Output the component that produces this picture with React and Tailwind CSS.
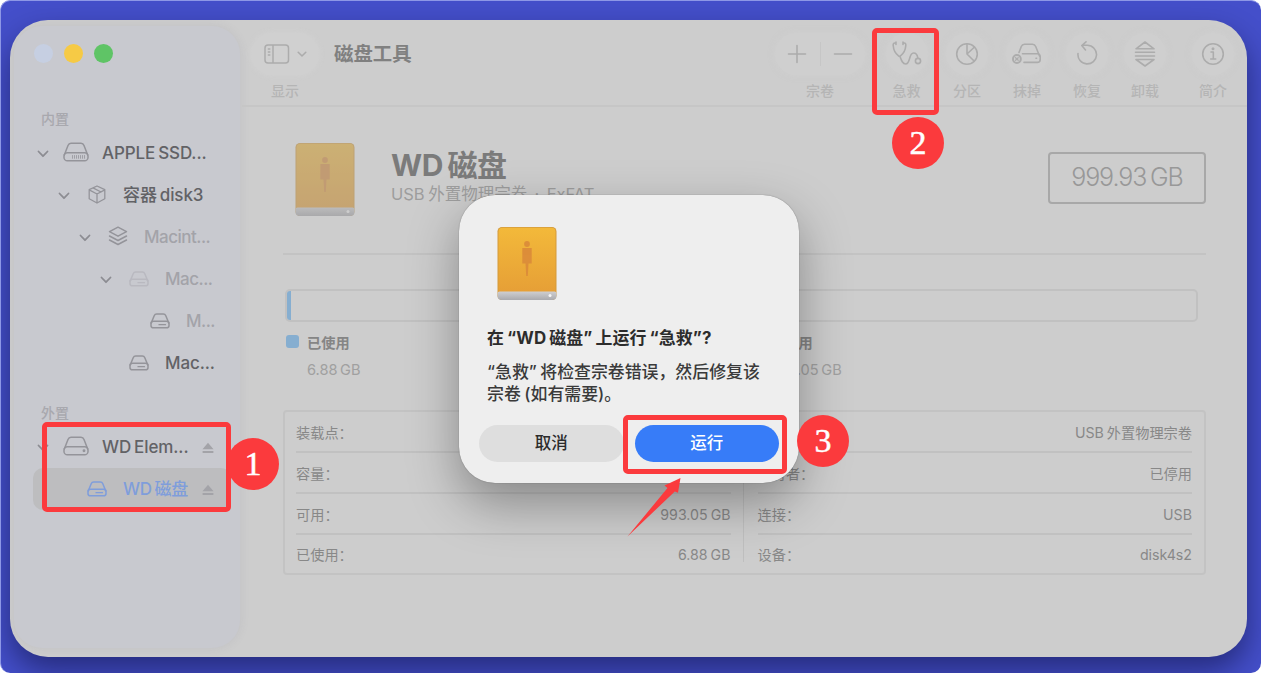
const SIDEBAR = [
  { section: '内置' },
  { label: 'APPLE SSD...', level: 0, icon: 'ssd', open: true, tone: 'strong' },
  { label: '容器 disk3', level: 1, icon: 'box', open: true, tone: 'strong' },
  { label: 'Macint...', level: 2, icon: 'layers', open: true, tone: 'dim' },
  { label: 'Mac...', level: 3, icon: 'disk', open: true, tone: 'dim', faint: true },
  { label: 'M...', level: 4, icon: 'disk', tone: 'dim' },
  { label: 'Mac...', level: 3, icon: 'disk', tone: 'strong' },
  { section: '外置' },
  { label: 'WD Elem...', level: 0, icon: 'hdd', open: true, tone: 'strong', eject: true },
  { label: 'WD 磁盘', level: 1, icon: 'disk', tone: 'active', eject: true, selected: true },
]

const INDENT = ['pl-[21px]', 'pl-[42px]', 'pl-[63px]', 'pl-[84px]', 'pl-[105px]']

const TONES = {
  strong: 'text-[#626266] tracking-[-0.1px]',
  dim: 'text-[#a3a3a9] tracking-[-0.5px]',
  active: 'text-[#7f9ddb] tracking-[-0.3px]',
}

const TOOLS = [
  { label: '急救', icon: 'aid', box: 'w-[61px]' },
  { label: '分区', icon: 'pie', box: 'w-[60px]' },
  { label: '抹掉', icon: 'erase', box: 'w-[60px]' },
  { label: '恢复', icon: 'restore', box: 'w-[60px]' },
  { label: '卸载', icon: 'unmount', box: 'w-[56px]' },
  { label: '简介', icon: 'info', box: 'ml-[10px] w-[60px]' },
]

const LEFT_INFO = [
  ['装载点：', ''],
  ['容量：', ''],
  ['可用：', '993.05 GB'],
  ['已使用：', '6.88 GB'],
]

const RIGHT_INFO = [
  ['类型：', 'USB 外置物理宗卷'],
  ['所有者：', '已停用'],
  ['连接：', 'USB'],
  ['设备：', 'disk4s2'],
]

export default function App() {
  return (
    <div className="h-[673px] w-[1261px] bg-white font-['Inter','Noto_Sans_CJK_SC',sans-serif]">
      <div className="relative h-full overflow-hidden rounded-[10px] border-l border-t border-[#8d97e6] bg-[#444fca] pl-[9px] pt-[19px]">
        <div className="flex h-[637px] w-[1237px] overflow-hidden rounded-[38px] bg-[#cdcdcd] shadow-[0_14px_30px_rgba(0,0,30,0.45)]">
          <Sidebar />
          <main className="flex min-w-0 flex-1 flex-col">
            <Toolbar />
            <DiskDetail />
          </main>
        </div>
        <Dialog />
        <Annotations />
      </div>
    </div>
  )
}

function Sidebar() {
  return (
    <aside className="mb-[9px] ml-[4px] mr-[2px] mt-[6px] flex w-[226px] flex-col rounded-[28px] bg-[#c8c9cf] shadow-[0_0_10px_rgba(120,120,140,0.14)]">
      <div className="flex gap-[11px] pl-[20px] pt-[18px]">
        <span className="size-[19px] rounded-full bg-[#c6cfe2]" />
        <span className="size-[19px] rounded-full bg-[#f6ca45]" />
        <span className="size-[19px] rounded-full bg-[#5fc466]" />
      </div>
      <div className="flex flex-col pt-[42px]">
        {SIDEBAR.map((item, i) =>
          item.section ? (
            <div key={i} className={`flex items-center pl-[27px] text-[14px] font-medium leading-none text-[#a8a8ae] ${i ? 'h-[42px] pt-[16px]' : 'h-[27px]'}`}>
              {item.section}
            </div>
          ) : (
            <SidebarRow key={i} item={item} />
          )
        )}
      </div>
    </aside>
  )
}

function SidebarRow({ item }) {
  const { level, icon, tone, open, eject, selected, faint, label } = item
  return (
    <div className={selected ? 'ml-[19px] mr-[9px] rounded-[10px] bg-[#bdbdbf]' : ''}>
      <div className={`flex h-[42px] items-center ${selected ? 'pl-[23px] pr-[17px]' : `pr-[26px] ${INDENT[level]}`}`}>
        <span className="flex w-[16px] shrink-0 justify-center text-[#8c8c92]">
          {open && (
            <svg className="mt-px" width="12" height="8" viewBox="0 0 12 8" fill="none" stroke="currentColor" strokeWidth="1.8" strokeLinecap="round" strokeLinejoin="round">
              <path d="M1.500 1.500 6 6.200l4.500-4.700" />
            </svg>
          )}
        </span>
        <span className={`ml-[12px] flex w-[26px] shrink-0 justify-center ${selected ? 'text-[#7f9ddb]' : faint ? 'text-[#b9b9c0]' : 'text-[#94949a]'}`}>
          <DriveIcon kind={icon} />
        </span>
        <span className={`ml-[13px] min-w-0 flex-1 whitespace-nowrap pt-px text-[17px] leading-none [word-spacing:-1.500px] ${TONES[tone]} ${selected ? 'font-medium' : 'font-[450]'}`}>
          {label}
        </span>
        {eject && (
          <svg className="mt-[2px] shrink-0" width="12" height="12" viewBox="0 0 12 12" fill="#a3a3a8">
            <path d="M6 .8 11.500 7.300H.5z" />
            <rect x=".5" y="9" width="11" height="1.900" rx=".6" />
          </svg>
        )}
      </div>
    </div>
  )
}

function DriveIcon({ kind }) {
  const stroke = { fill: 'none', stroke: 'currentColor', strokeWidth: 1.5, strokeLinecap: 'round', strokeLinejoin: 'round' }
  if (kind === 'ssd' || kind === 'hdd') {
    return (
      <svg className="-mt-[2px]" width="26" height="20" viewBox="0 0 26 20" {...stroke}>
        <path d="M1.300 13 5 3.400Q5.800 1.200 8 1.200H18Q20.200 1.200 21 3.400L24.700 13" />
        <rect x="1" y="10.800" width="24" height="8" rx="3.400" />
        {kind === 'ssd' ? (
          <path strokeWidth=".8" d="M9.500 13.500v2.800M11.500 13.500v2.800M13.500 13.500v2.800M15.500 13.500v2.800M17.500 13.500v2.800M19.500 13.500v2.800M21.500 13.500v2.800" />
        ) : (
          <circle cx="21" cy="14.800" r=".7" fill="currentColor" />
        )}
      </svg>
    )
  }
  if (kind === 'disk') {
    return (
      <svg className="-mt-px" width="20" height="16" viewBox="0 0 20 16" {...stroke}>
        <path d="M1.200 10 4.200 2.700Q4.900 1 6.700 1h6.600Q15.100 1 15.800 2.700L18.800 10" />
        <rect x="1" y="8.200" width="18" height="6.600" rx="2.400" />
        <path strokeWidth="1.300" d="M9 11.700h6.500" />
      </svg>
    )
  }
  if (kind === 'box') {
    return (
      <svg className="-mt-[2px]" width="18" height="19" viewBox="0 0 18 19" {...stroke} strokeWidth="1.300">
        <path d="M9 1 16.800 4.700v9L9 18 1.200 13.700v-9zM1.200 4.900 9 9l7.800-4.100M9 9v9M5 2.900l8 4.100" />
      </svg>
    )
  }
  return (
    <svg className="-mt-[2px]" width="20" height="20" viewBox="0 0 20 20" {...stroke}>
      <path d="M10 1.200 18.500 5.700 10 10.200 1.500 5.700zM1.500 10l8.500 4.500L18.500 10M1.500 14l8.500 4.500L18.500 14" />
    </svg>
  )
}

function Toolbar() {
  return (
    <header className="flex h-[87px] shrink-0 border-b-2 border-[#c6c6c6] pt-[13px] text-[#acacac]">
      <div className="ml-[9px] flex w-[68px] flex-col items-center">
        <div className="flex h-[42px] w-full items-center justify-center gap-[7px] rounded-full bg-[#d0d0d0] shadow-[0_0_6px_rgba(213,213,213,0.6)]">
          <svg width="26" height="20" viewBox="0 0 26 20" fill="none" stroke="currentColor" strokeWidth="1.500">
            <rect x="1" y="1" width="23.500" height="18" rx="3" />
            <path d="M9 1v18M3.800 5h2.500M3.800 8h2.500M3.800 11h2.500" />
          </svg>
          <svg width="10" height="7" viewBox="0 0 10 7" fill="none" stroke="currentColor" strokeWidth="1.600" strokeLinecap="round">
            <path d="M1.200 1.300 5 5l3.800-3.700" />
          </svg>
        </div>
        <ToolLabel>显示</ToolLabel>
      </div>
      <h1 className="ml-[15px] h-[43px] text-[19.400px] font-bold leading-[43px] text-[#808080]">磁盘工具</h1>
      <div className="ml-auto flex w-[90px] flex-col items-center">
        <div className="flex h-[42px] w-full items-center rounded-full bg-[#cfcfcf] shadow-[0_0_6px_rgba(211,211,211,0.5)]">
          <svg className="mx-auto" width="20" height="20" viewBox="0 0 20 20" stroke="currentColor" strokeWidth="1.600" strokeLinecap="round"><path d="M10 1.500v17M1.500 10h17" /></svg>
          <span className="h-[24px] w-px bg-[#c6c6c6]" />
          <svg className="mx-auto" width="20" height="20" viewBox="0 0 20 20" stroke="currentColor" strokeWidth="1.600" strokeLinecap="round"><path d="M1.500 10h17" /></svg>
        </div>
        <ToolLabel>宗卷</ToolLabel>
      </div>
      <div className="ml-[11px] mr-[4px] flex">
        {TOOLS.map((t) => (
          <div key={t.label} className={`flex flex-col items-center ${t.box}`}>
            <div className="flex size-[42px] items-center justify-center rounded-full bg-[#cfcfcf] shadow-[0_0_6px_rgba(211,211,211,0.5)]">
              <ToolIcon kind={t.icon} />
            </div>
            <ToolLabel>{t.label}</ToolLabel>
          </div>
        ))}
      </div>
    </header>
  )
}

function ToolLabel({ children }) {
  return <span className="mt-[8px] text-[14px] font-medium leading-[16px] text-[#b5b5b5]">{children}</span>
}

function ToolIcon({ kind }) {
  const props = { width: 30, height: 26, viewBox: '0 0 30 26', fill: 'none', stroke: 'currentColor', strokeWidth: 1.6, strokeLinecap: 'round', strokeLinejoin: 'round' }
  switch (kind) {
    case 'aid':
      return (
        <svg {...props}>
          <path d="M4 2H2.800Q1 2 1.200 4.500C1.500 8.500 3.300 12.500 6.500 14.800q1 .8 2 0C11.700 12.500 13.500 8.500 13.800 4.500Q14 2 12.200 2H11M4 1v2.500M11 1v2.500" />
          <path d="M8 15.500c1.500 4 2.500 7.500 5.700 7.500 5 0 2.800-11 7.800-11 3 0 4 2.500 4.300 5" />
          <circle cx="26" cy="20" r="2.600" />
        </svg>
      )
    case 'pie':
      return (
        <svg {...props}>
          <circle cx="15" cy="13" r="10.300" />
          <path d="M15 2.700V13l7.300 7.300M15 13l7.500-7" />
        </svg>
      )
    case 'erase':
      return (
        <svg {...props}>
          <path d="M7 11.500 9.300 5.500Q10.200 3.200 12.500 3.200h8q2.300 0 3.200 2.300L27.500 15" />
          <path d="M10.500 12.800h14.700q3 0 3 3v2.600q0 3-3 3H12" />
          <path d="M24 17.200h.6" />
          <circle cx="4.900" cy="18" r="3.900" strokeWidth="2" />
          <path strokeWidth="1.300" d="m3.600 16.700 2.600 2.600m0-2.600-2.600 2.600" />
        </svg>
      )
    case 'restore':
      return (
        <svg {...props}>
          <path d="M6 12.500a9.300 9.300 0 1 0 9.300-8.200H10M14 .8l-4.200 3.700L13.500 9" />
        </svg>
      )
    case 'unmount':
      return (
        <svg {...props}>
          <path d="M15 1 24 7.800H6zM5.500 11.300h19M5.500 15h19M6 18.500h18L15 25z" />
        </svg>
      )
    default:
      return (
        <svg {...props}>
          <circle cx="15" cy="13" r="10.300" />
          <path d="M13 11h2.300v7M12.700 18h5" />
          <circle cx="15" cy="7.800" r=".7" fill="currentColor" />
        </svg>
      )
  }
}

function DriveArt({ id, className = '' }) {
  return (
    <svg className={className} width="60" height="74" viewBox="0 0 60 74">
      <defs>
        <linearGradient id={`${id}-top`} x1="0" y1="0" x2="0" y2="1">
          <stop offset="0" stopColor="#f3b93a" />
          <stop offset="1" stopColor="#e59d36" />
        </linearGradient>
        <linearGradient id={`${id}-base`} x1="0" y1="0" x2="0" y2="1">
          <stop offset="0" stopColor="#cfcfd1" />
          <stop offset="1" stopColor="#aaaaae" />
        </linearGradient>
      </defs>
      <rect x=".5" y="0" width="59" height="73" rx="4.500" fill="#d39a3c" />
      <rect x="1.500" y=".7" width="57" height="70" rx="4" fill={`url(#${id}-top)`} />
      <path d="M.5 66.500q0-2 2-2h55q2 0 2 2v2.500q0 4-4.500 4H5Q.5 73 .5 69z" fill={`url(#${id}-base)`} />
      <circle cx="53" cy="68.500" r="1.500" fill="#f5f5f5" />
      <g fill="#d9883a" opacity=".85">
        <circle cx="30" cy="17" r="2.900" />
        <path d="M25.300 21h9.400v15.500h-3.200L30.800 49h-1.600l-.7-12.500h-3.200z" />
      </g>
    </svg>
  )
}

function DiskDetail() {
  return (
    <section className="flex flex-col pl-[41px] pr-[41px] text-[#929292]">
      <div className="flex h-[148px] items-start border-b-2 border-[#c3c3c3] pl-[12px] pt-[36px]">
        <DriveArt id="main" className="brightness-[0.84] opacity-[0.57]" />
        <div className="ml-[36px] pt-[3px]">
          <h2 className="text-[30px] font-bold leading-[38px] tracking-[-0.500px] text-[#7b7b7b] [word-spacing:-2px]">WD 磁盘</h2>
          <p className="text-[16.500px] leading-[20px] text-[#9d9d9d] [word-spacing:-1px]">USB 外置物理宗卷{'\u00a0'} · {'\u00a0'}ExFAT</p>
        </div>
        <div className="ml-auto mt-[9px] flex h-[52px] w-[158px] items-center justify-center rounded-[4px] border-2 border-[#a8a8a8] text-[25px] font-light tracking-[-1.100px] text-[#989898] [word-spacing:-2px]">
          999.93 GB
        </div>
      </div>

      {/* Usage bar */}
      <div className="ml-[2px] mt-[34px] flex h-[33px] w-[913px] overflow-hidden rounded-[5px] border-2 border-[#c1c1c1]">
        <span className="-my-0.5 -ml-0.5 w-[6px] bg-[#86aed0]" />
      </div>
      <div className="ml-[3px] mt-[12px] flex">
        <Legend name="已使用" size="6.88 GB" swatch="bg-[#86aed0]" />
        <Legend name="未使用" size="993.05 GB" swatch="bg-[#d8d8d8]" />
      </div>

      {/* Details */}
      <div className="mt-[31px] flex h-[165px] rounded-[4px] border-2 border-[#c3c3c3] pl-[11px] pr-[12px]">
        <InfoColumn rows={LEFT_INFO} />
        <div className="ml-[12px] mr-[14px] mt-[12px] h-[138px] w-px bg-[#bfbfbf]" />
        <InfoColumn rows={RIGHT_INFO} />
      </div>
    </section>
  )
}

function Legend({ name, size, swatch }) {
  return (
    <div className="flex w-[463px] shrink-0 items-start gap-[8px]">
      <span className={`mt-px size-[13px] rounded-[3px] ${swatch}`} />
      <div>
        <p className="text-[14.200px] font-bold leading-[18px] text-[#858585]">{name}</p>
        <p className="mt-[9px] text-[14.600px] leading-[18px] text-[#a0a0a0] [word-spacing:-1.500px]">{size}</p>
      </div>
    </div>
  )
}

function InfoColumn({ rows }) {
  return (
    <dl className="min-w-0 flex-1 text-[14.200px] text-[#888888]">
      {rows.map(([k, v]) => (
        <div key={k} className="flex h-[41px] items-center justify-between border-b-2 border-[#c1c1c1] pt-[3px] last:h-[38px] last:border-0 last:pt-[1px]">
          <dt>{k}</dt>
          <dd className="[word-spacing:-1px]">{v}</dd>
        </div>
      ))}
    </dl>
  )
}

function Dialog() {
  return (
    <div role="dialog" className="absolute left-[458px] top-[194px] flex h-[288px] w-[340px] flex-col rounded-[36px] bg-[#eeeeee] px-[20px] pt-[32px] text-[#2c2c2c] shadow-[0_0_1px_rgba(0,0,0,0.5),0_20px_50px_rgba(0,0,0,0.34)]">
      <DriveArt id="dialog" className="ml-[18px]" />
      <div className="ml-[8px] whitespace-nowrap">
        <h3 className="mt-[26px] text-[16.900px] font-bold leading-[22px] tracking-[0.150px] [word-spacing:-1.200px]">在 “WD 磁盘” 上运行 “急救”?</h3>
        <p className="mt-[12px] text-[16.900px] font-medium leading-[22px] text-[#3a3a3a] [word-spacing:-1px]">
          “急救” 将检查宗卷错误，然后修复该
          <br />
          宗卷 (如有需要)。
        </p>
      </div>
      <div className="mt-[20px] flex gap-[11px] text-[16.500px] font-medium">
        <button className="h-[37px] flex-1 rounded-full bg-[#dedede]">取消</button>
        <button className="h-[37px] flex-1 rounded-full bg-[#377cf8] text-white">运行</button>
      </div>
    </div>
  )
}

function Annotations() {
  return (
    <>
      <div className="absolute left-[41px] top-[421px] h-[90px] w-[189px] rounded-[5px] border-[5px] border-[#fb3a3d]" />
      <div className="absolute left-[871px] top-[27px] h-[87px] w-[67px] rounded-[5px] border-[5px] border-[#fb3a3d]" />
      <div className="absolute left-[622px] top-[414px] h-[59px] w-[164px] rounded-[5px] border-[5px] border-[#fb3a3d]" />
      <svg className="absolute left-[624px] top-[474px]" width="60" height="64" viewBox="0 0 60 64" fill="#fb3a3d">
        <path d="M2.500 61.500 42.500 13 39.500 10.500 55.500 3 53 17.800 49.800 16.500Z" />
      </svg>
      <Badge n="1" pos="left-[226px] top-[437px]" />
      <Badge n="2" pos="left-[891px] top-[116px]" />
      <Badge n="3" pos="left-[796px] top-[414px]" />
    </>
  )
}

function Badge({ n, pos }) {
  return (
    <span className={`absolute flex size-[52px] items-center justify-center rounded-full bg-[#fb3a3d] pb-[1px] font-['Liberation_Serif',serif] text-[34px] leading-none text-white [-webkit-text-stroke:0.5px_white] ${pos}`}>
      {n}
    </span>
  )
}
